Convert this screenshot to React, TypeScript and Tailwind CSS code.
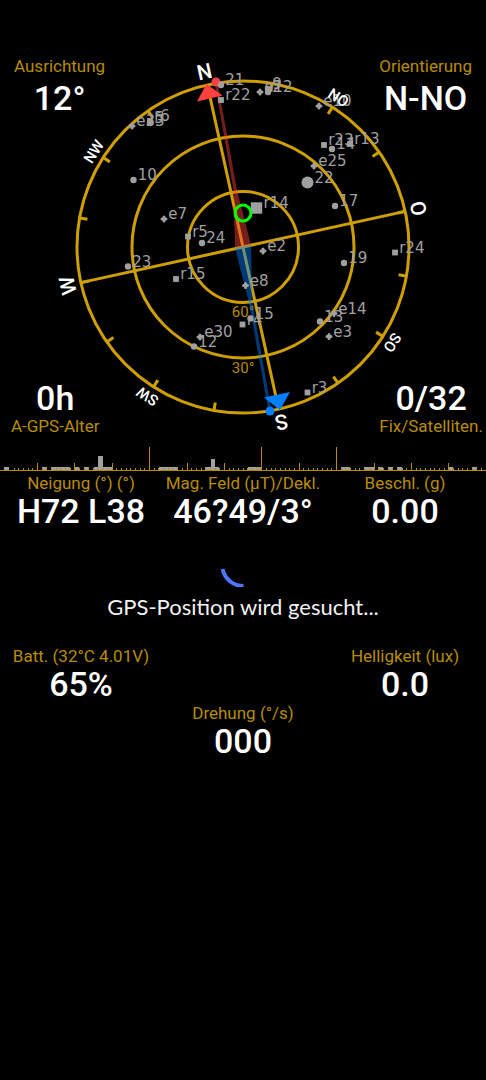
type SatelliteKind = 'gps' | 'glonass' | 'galileo'

interface Satellite {
  kind: SatelliteKind
  label: string
  x: number
  y: number
  large?: boolean
}

interface StatProps {
  label: string
  value: string
}

// Offset of north on the dial, in degrees
const HEADING = -12.4
const RADIUS = 166

// Positions are relative to the centre of the sky plot
const satellites: Satellite[] = [
  { kind: 'gps', label: '21', x: -22, y: -162 },
  { kind: 'glonass', label: 'r22', x: -22, y: -147 },
  { kind: 'galileo', label: 'e12', x: 17, y: -155 },
  { kind: 'gps', label: '2', x: 25, y: -155 },
  { kind: 'gps', label: '9', x: 25, y: -158 },
  { kind: 'galileo', label: 'e10', x: 76, y: -141 },
  { kind: 'galileo', label: 'e33', x: -111, y: -121 },
  { kind: 'gps', label: '5', x: -93, y: -124 },
  { kind: 'glonass', label: 'r6', x: -93, y: -126 },
  { kind: 'glonass', label: 'r23', x: 81, y: -102 },
  { kind: 'gps', label: '14', x: 89, y: -98 },
  { kind: 'glonass', label: 'r13', x: 107, y: -103 },
  { kind: 'galileo', label: 'e25', x: 71, y: -81 },
  { kind: 'gps', label: '22', x: 64.5, y: -64.5, large: true },
  { kind: 'gps', label: '17', x: 92, y: -41 },
  { kind: 'glonass', label: 'r14', x: 13.5, y: -39, large: true },
  { kind: 'glonass', label: 'r24', x: 152, y: 5.5 },
  { kind: 'galileo', label: 'e2', x: 20, y: 4 },
  { kind: 'gps', label: '19', x: 101, y: 16 },
  { kind: 'galileo', label: 'e8', x: 2.5, y: 38.5 },
  { kind: 'gps', label: '10', x: -109.5, y: -67 },
  { kind: 'galileo', label: 'e7', x: -79, y: -28 },
  { kind: 'glonass', label: 'r5', x: -55, y: -10.5 },
  { kind: 'gps', label: '24', x: -41, y: -4 },
  { kind: 'gps', label: '23', x: -115, y: 19.5 },
  { kind: 'glonass', label: 'r15', x: -67, y: 32 },
  { kind: 'glonass', label: 'r4', x: -0.5, y: 77.5 },
  { kind: 'gps', label: '15', x: 7.5, y: 71.5 },
  { kind: 'galileo', label: 'e14', x: 91, y: 66.5 },
  { kind: 'gps', label: '13', x: 77, y: 74.5 },
  { kind: 'galileo', label: 'e3', x: 86, y: 89.5 },
  { kind: 'galileo', label: 'e30', x: -43, y: 90 },
  { kind: 'gps', label: '12', x: -49, y: 99.5 },
  { kind: 'glonass', label: 'r3', x: 64.5, y: 145.5 },
]

const directions = ['N', 'NO', 'O', 'SO', 'S', 'SW', 'W', 'NW']

// Signal bars: left edge, width, height
const signalBars = [
  [4, 5, 3], [42, 5, 3], [51, 19, 3], [75, 4, 3], [84, 5, 3], [94, 18, 3], [98, 5, 14],
  [159, 19, 3], [205, 14, 3], [211, 4, 11], [248, 14, 3], [341, 9, 3], [364, 10, 3],
  [378, 5, 3], [388, 5, 3], [397, 5, 3], [449, 4, 3], [472, 5, 3],
]

function SatelliteMark({ kind, label, x, y, large }: Satellite) {
  const r = large ? 6 : 3.2
  return (
    <g fill="#a0a0a0">
      {kind === 'gps' && <circle cx={x} cy={y} r={r} />}
      {kind === 'glonass' && <rect x={x - r + 0.3} y={y - r + 0.3} width={r * 2 - 0.6} height={r * 2 - 0.6} />}
      {kind === 'galileo' && (
        <path d={`M${x - 2} ${y}h4M${x} ${y - 2}v4`} stroke="#a0a0a0" strokeWidth="3" strokeLinecap="round" />
      )}
      <text x={x + r + 1} y={y} className="font-['DejaVu_Sans',sans-serif] text-[15px]">
        {label}
      </text>
    </g>
  )
}

function SkyPlot() {
  return (
    <svg viewBox="-243 -207 486 400" className="col-start-1 row-start-1 w-full" role="img" aria-label="Kompass">
      <g fill="none" stroke="#cf9f00" strokeWidth="3">
        <circle r="55.5" />
        <circle r="111" />
        <circle r={RADIUS} />
        <g transform={`rotate(${HEADING})`}>
          <path d={`M0 ${-RADIUS}V${RADIUS}M${-RADIUS} 0H${RADIUS}`} />
          {Array.from({ length: 16 }, (_, i) => (
            <path key={i} d={`M0 ${-RADIUS - 1}v9`} transform={`rotate(${i * 22.5})`} />
          ))}
        </g>
      </g>

      <g fill="#b88c00" textAnchor="middle" className="text-[15px]">
        <text x="0" y="70">60°</text>
        <text x="0" y="126">30°</text>
      </g>

      {/* Needle towards magnetic north */}
      <g opacity="0.45">
        <path d="M-8 1L-9.5 -57L-28.5 -165L-25.5 -165L-6 -57L8 -2Z" fill="#ff4040" />
        <path d="M8 -2L9.5 56L28.5 164L25.5 164L6 56L-8 1Z" fill="#007fff" />
      </g>
      <circle cx="-27" cy="-165" r="4.5" fill="#ff4040" />
      <circle cx="27" cy="164" r="4.5" fill="#007fff" />
      <path d="M-36.5 -163L-46 -145.5L-20.5 -151.5Z" fill="#ff4040" />
      <path d="M21 150.5L47 145L37 163Z" fill="#007fff" />

      {satellites.map((satellite) => (
        <SatelliteMark key={satellite.label} {...satellite} />
      ))}

      <circle cx="0" cy="-34" r="8" fill="none" stroke="#00ff00" strokeWidth="3" />

      <g fill="#ffffff" textAnchor="middle" className="font-medium">
        {directions.map((name, i) => (
          <text
            key={name}
            y="-172"
            transform={`rotate(${HEADING + i * 45})`}
            className={name.length === 1 ? 'text-[21px]' : 'text-[15px]'}
          >
            {name}
          </text>
        ))}
      </g>
    </svg>
  )
}

function SignalRuler() {
  const tall = [32, 56, 72]
  return (
    <svg viewBox="0 0 486 33" className="w-full" role="img" aria-label="Signalstärke" shapeRendering="crispEdges">
      {signalBars.map(([x, width, height]) => (
        <rect key={`${x}-${height}`} x={x} y={30 - height} width={width} height={height} fill="#a0a0a0" />
      ))}
      <g stroke="#b88c00">
        <path d="M0 30.5H486" />
        {Array.from({ length: 101 }, (_, i) => {
          const n = i + 3
          const height = tall.includes(n) ? 23 : n % 8 === 0 ? 7 : 2
          return <path key={n} d={`M${Math.floor(n * 4.675) + 0.5} 30v${-height}`} />
        })}
      </g>
    </svg>
  )
}

function Label({ children }: { children: string }) {
  return <div className="whitespace-nowrap text-[17px] leading-5 text-[#b88c00]">{children}</div>
}

function Value({ children }: { children: string }) {
  return <div className="whitespace-nowrap text-[34px] font-medium leading-8 text-white">{children}</div>
}

function Stat({ label, value }: StatProps) {
  return (
    <div className="flex flex-col items-center gap-0.5">
      <Label>{label}</Label>
      <Value>{value}</Value>
    </div>
  )
}

export default function App() {
  return (
    <main className="min-h-screen bg-black pt-10 font-[Roboto,sans-serif]">
      <section className="grid">
        <SkyPlot />
        <div className="col-start-1 row-start-1 flex flex-col justify-between pb-1 pt-4">
          <div className="flex justify-between px-[14px]">
            <div className="flex flex-col items-center gap-1.5">
              <Label>Ausrichtung</Label>
              <Value>12°</Value>
            </div>
            <div className="flex flex-col items-center gap-1.5">
              <Label>Orientierung</Label>
              <Value>N-NO</Value>
            </div>
          </div>
          <div className="flex justify-between pl-[11px] pr-[3px]">
            <div className="flex flex-col items-center gap-0.5">
              <Value>0h</Value>
              <Label>A-GPS-Alter</Label>
            </div>
            <div className="flex flex-col items-center gap-0.5">
              <Value>0/32</Value>
              <Label>Fix/Satelliten.</Label>
            </div>
          </div>
        </div>
      </section>

      <SignalRuler />

      <section className="grid grid-cols-3">
        <Stat label="Neigung (°) (°)" value="H72 L38" />
        <Stat label="Mag. Feld (µT)/Dekl." value="46?49/3°" />
        <Stat label="Beschl. (g)" value="0.00" />
      </section>

      <div role="status" className="mb-[25px] mt-[14px] flex flex-col items-center gap-1.5">
        <svg viewBox="0 0 46 46" className="size-[46px]" aria-hidden="true">
          <path d="M2.5 28A21.5 21.5 0 0 0 23.5 45" fill="none" stroke="#4f74ff" strokeWidth="4" />
        </svg>
        <p className="font-[Lato,sans-serif] text-[22px] leading-7 text-[#f2f2f2]">GPS-Position wird gesucht...</p>
      </div>

      <section className="grid grid-cols-3 gap-y-[3px]">
        <Stat label="Batt. (32°C 4.01V)" value="65%" />
        <div className="col-start-3">
          <Stat label="Helligkeit (lux)" value="0.0" />
        </div>
        <div className="col-start-2">
          <Stat label="Drehung (°/s)" value="000" />
        </div>
      </section>
    </main>
  )
}
